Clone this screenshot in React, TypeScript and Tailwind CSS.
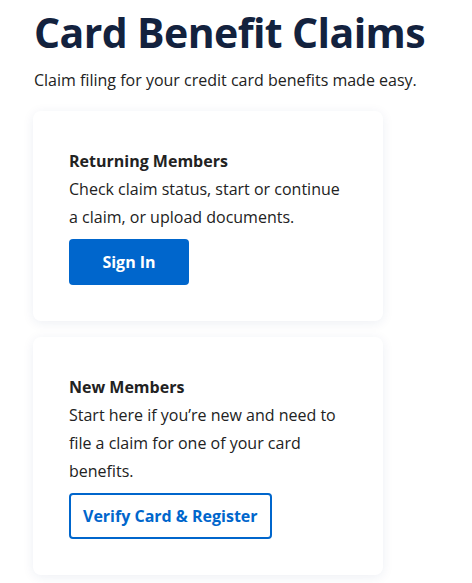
export default function App() {
  return (
    <div className="min-h-screen bg-white px-[34px] pt-[4px] font-['Open_Sans',sans-serif]">
      <h1 className="whitespace-nowrap text-[41px] leading-[56px] tracking-[-0.6px] font-bold text-[#13223e]">Card Benefit Claims</h1>
      <p className="mt-[8px] text-[16px] leading-[24px] text-[#222]">
        Claim filing for your credit card benefits made easy.
      </p>

      <div className="mt-[19px] flex flex-col gap-4 w-[350px] -ml-px">
        <div className="bg-white rounded-lg shadow-[0_2px_12px_rgba(30,50,120,0.08)] p-9 text-[16px] leading-[28px] text-[#222]">
          <h2 className="font-bold">Returning Members</h2>
          <p>Check claim status, start or continue a claim, or upload documents.</p>
          <button className="mt-2 w-[120px] h-[46px] rounded bg-[#0066cc] text-white font-bold">Sign In</button>
        </div>

        <div className="bg-white rounded-lg shadow-[0_2px_12px_rgba(30,50,120,0.08)] p-9 text-[16px] leading-[28px] text-[#222]">
          <h2 className="font-bold">New Members</h2>
          <p>Start here if you’re new and need to file a claim for one of your card benefits.</p>
          <button className="mt-2 h-[46px] px-[12px] rounded border-2 border-[#0066cc] text-[#0066cc] font-bold">
            Verify Card &amp; Register
          </button>
        </div>
      </div>
    </div>
  )
}
